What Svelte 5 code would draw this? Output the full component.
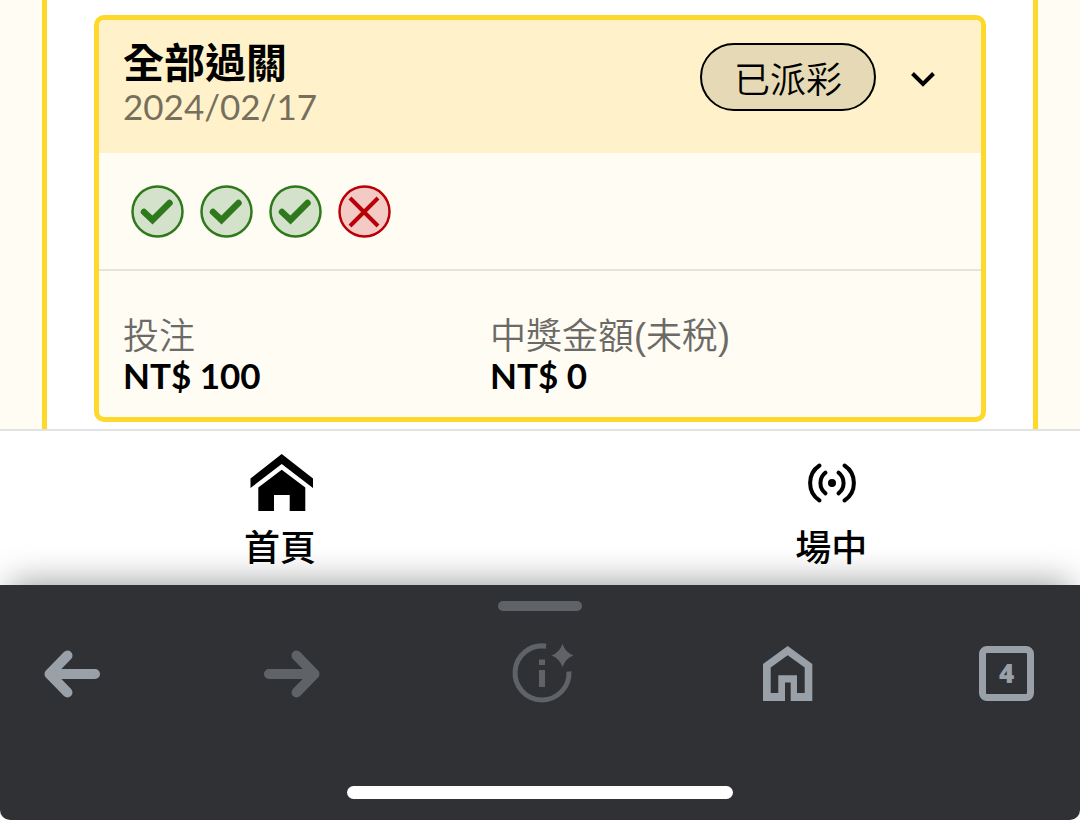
<script>
  const bet = {
    title: '全部過關',
    date: '2024/02/17',
    status: '已派彩',
    picks: [true, true, true, false],
    amounts: [
      { label: '投注', value: 'NT$ 100' },
      { label: '中獎金額(未稅)', value: 'NT$ 0' }
    ]
  };

  const tabCount = 4;
</script>

<div class="screen">
  <main class="page">
    <div class="sheet">
      <article class="card">
        <header class="card-header">
          <div>
            <h2>{bet.title}</h2>
            <time>{bet.date}</time>
          </div>
          <div class="status">
            <span class="pill">{bet.status}</span>
            <button class="toggle" aria-label="展開">
              <svg viewBox="0 0 28 20">
                <path d="M3.5 6.5 14 17 24.5 6.5" fill="none" stroke="#000" stroke-width="4" />
              </svg>
            </button>
          </div>
        </header>

        <div class="picks">
          {#each bet.picks as won}
            <svg class="pick" class:lost={!won} viewBox="0 0 53 53">
              <circle cx="26.5" cy="26.5" r="25" />
              {#if won}
                <path class="tick" d="M13 27l8.5 8L38.5 18" />
              {:else}
                <path class="cross" d="M12 13l28 28M40 13l-28 28" />
              {/if}
            </svg>
          {/each}
        </div>

        <dl class="amounts">
          {#each bet.amounts as amount}
            <div>
              <dt>{amount.label}</dt>
              <dd>{amount.value}</dd>
            </div>
          {/each}
        </dl>
      </article>
    </div>
  </main>

  <nav class="tabs">
    <a href="#home">
      <svg class="tab-icon" viewBox="-2 0 64 58">
        <path d="M.5 24.5 31.7 0 63 24.5V34L31.7 10 .5 34z" />
        <path d="M31.7 15.7 55.3 33.5V57H39.7V41H24v16H8.3V33.5z" />
      </svg>
      <span>首頁</span>
    </a>
    <a href="#live">
      <svg class="tab-icon" viewBox="-33 -29 64 58">
        <circle r="4" />
        <g fill="none" stroke="#000" stroke-width="4" stroke-linecap="round">
          <path d="M-6.5-10.3a13 13 0 0 0 0 20.6M6.5-10.3a13 13 0 0 1 0 20.6" />
          <path d="M-12.5-17.5a21 21 0 0 0 0 35M12.5-17.5a21 21 0 0 1 0 35" />
        </g>
      </svg>
      <span>場中</span>
    </a>
  </nav>

  <footer class="browser-bar">
    <div class="handle"></div>
    <div class="actions">
      <button aria-label="上一頁">
        <svg viewBox="0 0 56 56">
          <path class="arrow" d="M51 28H8M23.5 9.5 5.5 28l18 18.5" />
        </svg>
      </button>
      <button class="dim" aria-label="下一頁">
        <svg viewBox="0 0 56 56">
          <path class="arrow" d="M6 28h43M33.5 9.5l18 18.5-18 18.5" />
        </svg>
      </button>
      <button class="dim wide" aria-label="頁面資訊">
        <svg class="info" viewBox="-32 -29 60 60">
          <path d="M4-26.8A27 27 0 1 0 27-1.5" fill="none" stroke="currentColor" stroke-width="5" />
          <path d="M-3-13.5h6V-8h-6zM-3-3h6v17h-6z" />
          <path d="M20.5-29q3 8.5 11 11.5-8 3-11 11.5-3-8.5-11-11.5 8-3 11-11.5z" />
        </svg>
      </button>
      <button aria-label="首頁">
        <svg viewBox="0 0 56 56">
          <path
            fill-rule="evenodd"
            d="M3 18 27.7 0 52.3 18V55H30.7V36.5H25V55H3zM10.7 21.5V47h7.6V29.3H37V47h7.7V21.5L27.7 9.3z"
          />
        </svg>
      </button>
      <button class="tab-count" aria-label="分頁">{tabCount}</button>
    </div>
    <div class="indicator"></div>
  </footer>
</div>

<style>
  :global(body) {
    margin: 0;
    background: #fff;
  }

  .screen {
    font-family: Lato, 'Noto Sans CJK TC', sans-serif;
    color: #000;
  }

  button {
    padding: 0;
    border: none;
    background: transparent;
    color: inherit;
    font: inherit;
    cursor: pointer;
  }

  svg {
    display: block;
    overflow: visible;
    fill: currentColor;
  }

  .page {
    padding: 0 42px;
    background: #fffcf3;
  }

  .sheet {
    padding: 15px 47px 7px;
    border: solid #fed82b;
    border-width: 0 5px;
    background: #fff;
  }

  .card {
    border: 5px solid #fed82b;
    border-radius: 10px;
    background: #fffcf3;
    overflow: hidden;
  }

  .card-header {
    display: flex;
    justify-content: space-between;
    align-items: flex-start;
    padding: 21px 44px 26px 24px;
    background: #fff2ca;
  }

  h2 {
    margin: 0;
    font-size: 41px;
    line-height: 44px;
    font-weight: 700;
  }

  time {
    display: block;
    font-size: 35px;
    line-height: 42px;
    color: #766f5d;
  }

  .status {
    display: flex;
    align-items: center;
    gap: 33px;
    padding-top: 2px;
  }

  .pill {
    padding: 4px 32px 0;
    border: 2px solid #000;
    border-radius: 34px;
    background: #e5dab5;
    font-size: 36px;
    line-height: 60px;
    font-weight: 350;
  }

  .toggle svg {
    width: 28px;
    height: 20px;
  }

  .picks {
    display: flex;
    gap: 16px;
    padding: 32px 32px 31px;
    border-bottom: 2px solid #e5e3da;
  }

  .pick {
    width: 53px;
    height: 53px;
    fill: #d5e2cb;
    stroke: #2e791c;
    stroke-width: 2.5;
  }

  .pick.lost {
    fill: #f4cac5;
    stroke: #b90006;
  }

  .tick {
    fill: none;
    stroke-width: 6.5;
    stroke-linecap: round;
  }

  .cross {
    stroke-width: 4;
  }

  .amounts {
    display: grid;
    grid-template-columns: 11fr 14fr;
    margin: 0;
    padding: 47px 24px 23px;
    line-height: 38px;
  }

  dt {
    color: #6b6a66;
    font-family: 'Liberation Sans', 'Noto Sans CJK TC', sans-serif;
    font-size: 36px;
    font-weight: 350;
  }

  dd {
    margin: 0;
    font-size: 35px;
    font-weight: 700;
  }

  .tabs {
    display: flex;
    justify-content: space-between;
    padding: 23px 19.7% 16px 22.6%;
    border-top: 2px solid #e2e2e2;
    background: #fff;
  }

  .tabs a {
    display: flex;
    flex-direction: column;
    align-items: center;
    gap: 13px;
    color: #000;
    font-size: 36px;
    line-height: 44px;
    font-weight: 500;
    text-decoration: none;
  }

  .tab-icon {
    width: 64px;
    height: 58px;
  }

  .browser-bar {
    display: flex;
    flex-direction: column;
    align-items: center;
    padding: 16px 0 21px;
    border-radius: 0 0 10px 10px;
    background: #303135;
    box-shadow: 0 -12px 32px -10px rgba(0, 0, 0, 0.4);
  }

  .handle {
    width: 84px;
    height: 10px;
    border-radius: 5px;
    background: #5f6368;
  }

  .actions {
    align-self: stretch;
    display: flex;
    justify-content: space-between;
    padding: 35px 46px 84px 44px;
    color: #9aa0a8;
  }

  .actions button {
    width: 56px;
    height: 56px;
  }

  .actions .wide {
    display: flex;
    justify-content: center;
    align-items: center;
    width: 114px;
  }

  .actions .dim {
    color: #5f6368;
  }

  .info {
    width: 60px;
    height: 60px;
  }

  .arrow {
    fill: none;
    stroke: currentColor;
    stroke-width: 10;
    stroke-linecap: round;
    stroke-linejoin: round;
  }

  .actions .tab-count {
    width: 55px;
    height: 55px;
    border: 7px solid currentColor;
    border-radius: 8px;
    font-family: 'Open Sans', sans-serif;
    font-size: 26px;
    line-height: 41px;
    font-weight: 800;
  }

  .indicator {
    width: 386px;
    height: 13px;
    border-radius: 7px;
    background: #fff;
  }
</style>
